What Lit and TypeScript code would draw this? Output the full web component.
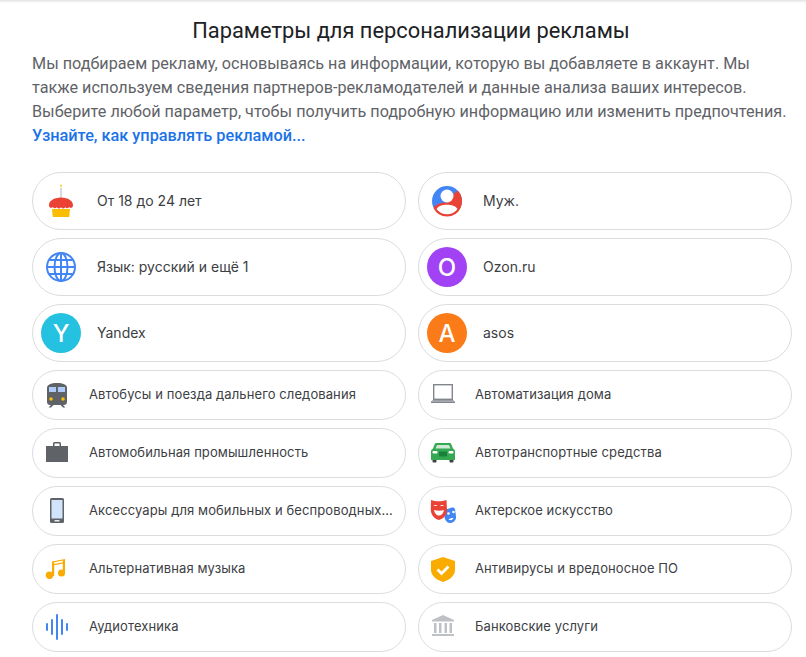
import { LitElement, html, css, svg } from 'lit';
import { customElement } from 'lit/decorators.js';

type Item = { label: string; icon?: unknown; letter?: string; color?: string };

const cake = svg`
  <rect x="17.400" y="5" width="1.200" height="10" fill="#bdc1c6"/>
  <path d="M18 1c.9 1.200 1 2.400 0 3.600-1-1.200-.9-2.400 0-3.600z" fill="#fbbc04"/>
  <path d="M9 26h18l-.8 8H9.800z" fill="#fbbc04"/>
  <path d="M6 23c-.6-5 5-8.500 12-8.500S30.600 18 30 23c-.8 2.400-2.900 2.200-3.800 1-1.200 1.600-2.900 1.600-4 .2-1.200 1.600-3 1.600-4.200 0-1.200 1.600-3 1.600-4.200 0-1.100 1.400-2.800 1.400-4 -.2C8.900 25.200 6.800 25.400 6 23z" fill="#ea4335"/>`;

const globe = svg`
  <g fill="none" stroke="#4285f4" stroke-width="2">
    <circle cx="18" cy="18" r="14"/>
    <ellipse cx="18" cy="18" rx="6.500" ry="14"/>
    <path d="M18 4v28M4 18h28M6 11h24M6 25h24"/>
  </g>`;

const person = svg`
  <circle cx="18" cy="18" r="15" fill="#4285f4"/>
  <path d="M28.600 7.400A15 15 0 0 1 28.600 28.600L18 24 20 15z" fill="#ea4335"/>
  <path d="M4.500 25a15 15 0 0 0 27 0c-2-4-8-5.500-13.500-5.500S6.500 21 4.500 25z" fill="#ea4335"/>
  <path d="M7.500 26c1.800-3 6-4.300 10.500-4.300s8.700 1.300 10.500 4.300a13 13 0 0 1-21 0z" fill="#fff"/>
  <circle cx="18" cy="13" r="6.500" fill="#fff"/>`;

const train = svg`
  <path d="M8 11c0-3.500 4-5 10-5s10 1.500 10 5v14c0 2-1.400 3-3 3H11c-1.600 0-3-1-3-3z" fill="#5f6368"/>
  <path d="M12 28l-2.500 2.500h2.500L14.500 28zM24 28l2.500 2.500H24L21.500 28z" fill="#5f6368"/>
  <rect x="10" y="10" width="7" height="5" fill="#aecbfa"/>
  <rect x="19" y="10" width="7" height="5" fill="#aecbfa"/>
  <circle cx="12" cy="22" r="1.800" fill="#fbbc04"/>
  <circle cx="24" cy="22" r="1.800" fill="#fbbc04"/>`;

const laptop = svg`
  <rect x="8.700" y="7.700" width="18.600" height="14.600" fill="none" stroke="#80868b" stroke-width="1.400"/>
  <path d="M8 23h20l2 1.500H6z" fill="#9aa0a6"/>
  <rect x="6" y="24.500" width="24" height="1.500" fill="#80868b"/>`;

const briefcase = svg`
  <path d="M14 11V8.500c0-.8.700-1.500 1.500-1.500h5c.8 0 1.500.7 1.500 1.500V11h-1.500V8.500h-5V11z" fill="#5f6368"/>
  <rect x="7" y="11" width="22" height="16" fill="#5f6368"/>`;

const car = svg`
  <rect x="7.500" y="24" width="4" height="3.500" rx="1" fill="#3c4043"/>
  <rect x="24.500" y="24" width="4" height="3.500" rx="1" fill="#3c4043"/>
  <path d="M8 13.500l1.700-4.200c.3-.8 1-1.300 1.800-1.300h13c.8 0 1.500.5 1.800 1.300l1.700 4.200c1.300.8 2 1.800 2 3.200V25H6v-8.300c0-1.400.7-2.400 2-3.200z" fill="#34a853"/>
  <path d="M10.500 13.500l1.500-3.500h12l1.500 3.500z" fill="#ceead6"/>
  <rect x="7.500" y="16" width="5" height="2.500" rx="1" fill="#fff"/>
  <rect x="23.500" y="16" width="5" height="2.500" rx="1" fill="#fff"/>
  <rect x="14" y="16.500" width="8" height="5" fill="#188038"/>`;

const phone = svg`
  <rect x="11" y="5" width="14" height="25" rx="1.500" fill="#5f6368"/>
  <rect x="12.500" y="7" width="11" height="18.500" fill="#d2e3fc"/>
  <rect x="15.500" y="27" width="5" height="1.500" fill="#e8eaed"/>`;

const masks = svg`
  <path d="M18 17.500l9-3c1.500-.3 2.500.2 3 1.500l1 7.500c.4 3-1.800 5.500-5 6.500-2.700.5-5-1.500-6-4z" fill="#4285f4"/>
  <circle cx="23.500" cy="20.500" r="1.300" fill="#fff"/>
  <circle cx="28.500" cy="19" r="1.300" fill="#fff"/>
  <path d="M23.500 26.500c1.300-1.200 3.300-1.800 5-1.500-.7 2-3.300 3-5 1.500z" fill="#fff"/>
  <path d="M6 7c4.500 1.800 10.500 1.800 15.500 0l.5 9.500c.1 5-3 9-8 10.500-4.500-1-8-5-8.200-10z" fill="#ea4335"/>
  <path d="M8.500 13c1-1.500 3-1.500 4 0zM15 13c1-1.500 3-1.500 4 0z" fill="#fff"/>
  <path d="M9 17c3 1 7 1 10 0-.5 3.500-2.500 5.500-5 5.500s-4.500-2-5-5.500z" fill="#fff"/>`;

const note = svg`
  <path d="M13 10.500L26 8v15h-2.200v-10.500l-8.600 1.700V25H13z" fill="#f9ab00"/>
  <path d="M15.200 11.200L23.800 9.500v1.800l-8.600 1.700z" fill="#fff"/>
  <circle cx="10.500" cy="24.300" r="3.700" fill="#f9ab00"/>
  <circle cx="22.500" cy="22" r="3.500" fill="#f9ab00"/>`;

const shield = svg`
  <path d="M18 6l12 4v9c0 5.500-5 9.700-12 12-7-2.300-12-6.500-12-12v-9z" fill="#f9ab00"/>
  <path d="M12.500 18.500l4 4 7-7" fill="none" stroke="#fff" stroke-width="2.800"/>`;

const wave = svg`
  <g stroke="#4285f4" stroke-width="2" stroke-linecap="round">
    <path d="M8 15v6M13 11v14M18 6v24M23 11v14M28 15v6"/>
  </g>`;

const bank = svg`
  <path d="M18 6L29 11v1.500H7V11z" fill="#bdc1c6"/>
  <path d="M9 14h2.500v10H9zM14 14h2.500v10H14zM19.500 14H22v10h-2.500zM24.500 14H27v10h-2.500z" fill="#bdc1c6"/>
  <rect x="7" y="25" width="22" height="2" fill="#bdc1c6"/>`;

const profile: Item[] = [
  { label: 'От 18 до 24 лет', icon: cake },
  { label: 'Муж.', icon: person },
  { label: 'Язык: русский и ещё 1', icon: globe },
  { label: 'Ozon.ru', letter: 'O', color: '#a142f4' },
  { label: 'Yandex', letter: 'Y', color: '#24c1e0' },
  { label: 'asos', letter: 'A', color: '#fa7b17' },
];

const topics: Item[] = [
  { label: 'Автобусы и поезда дальнего следования', icon: train },
  { label: 'Автоматизация дома', icon: laptop },
  { label: 'Автомобильная промышленность', icon: briefcase },
  { label: 'Автотранспортные средства', icon: car },
  { label: 'Аксессуары для мобильных и беспроводных устройств', icon: phone },
  { label: 'Актерское искусство', icon: masks },
  { label: 'Альтернативная музыка', icon: note },
  { label: 'Антивирусы и вредоносное ПО', icon: shield },
  { label: 'Аудиотехника', icon: wave },
  { label: 'Банковские услуги', icon: bank },
];

@customElement('app-root')
export class AppRoot extends LitElement {
  private renderIcon(item: Item) {
    if (item.letter) {
      return html`<span class="avatar" style="background:${item.color}">${item.letter}</span>`;
    }
    return html`<svg viewBox="0 0 36 36" aria-hidden="true">${item.icon}</svg>`;
  }

  private renderChip(item: Item) {
    return html`<div class="chip">
      <span class="slot">${this.renderIcon(item)}</span><span class="label">${item.label}</span>
    </div>`;
  }

  render() {
    return html`
      <main>
        <h1>Параметры для персонализации рекламы</h1>
        <p>
          Мы подбираем рекламу, основываясь на информации, которую вы добавляете в аккаунт. Мы<br />
          также используем сведения партнеров-рекламодателей и данные анализа ваших интересов.<br />
          Выберите любой параметр, чтобы получить подробную информацию или изменить предпочтения.<br />
          <a href="#">Узнайте, как управлять рекламой...</a>
        </p>
        <div class="grid profile">${profile.map((item) => this.renderChip(item))}</div>
        <div class="grid topics">${topics.map((item) => this.renderChip(item))}</div>
      </main>
    `;
  }

  static styles = css`
    :host {
      display: block;
      height: 657px;
      overflow: hidden;
      background: #fff;
      box-shadow: inset 0 3px 3px -2px rgba(60, 64, 67, 0.2);
      font-family: Roboto, 'Noto Sans', sans-serif;
    }

    main {
      padding: 17px 14px 0 32px;
    }

    h1 {
      margin: 0 2px 0 0;
      font-size: 21.85px;
      line-height: 28px;
      font-weight: 400;
      color: #202124;
      text-align: center;
    }

    p {
      margin: 7px 0 0;
      font-size: 16.2px;
      line-height: 24px;
      white-space: nowrap;
      color: #5f6368;
    }

    a {
      font-size: 16.3px;
      font-weight: 500;
      color: #1a73e8;
      text-decoration: none;
    }

    .grid {
      display: grid;
      grid-template-columns: 374px 374px;
      column-gap: 12px;
      row-gap: 8px;
    }

    .profile {
      margin-top: 24px;
    }

    .topics {
      margin-top: 8px;
    }

    .chip {
      display: flex;
      align-items: center;
      box-sizing: border-box;
      min-width: 0;
      border: 1px solid #dadce0;
      border-radius: 29px;
      font-family: Inter, Roboto, sans-serif;
      font-size: 14px;
      color: #3c4043;
    }

    .profile .chip {
      height: 58px;
    }

    .topics .chip {
      height: 50px;
      font-size: 13px;
      letter-spacing: 0.1px;
    }

    .slot {
      flex: none;
      display: flex;
      align-items: center;
      justify-content: center;
      width: 56px;
      margin-right: 8px;
    }

    .topics .slot {
      width: 48px;
    }

    svg {
      display: block;
      width: 36px;
      height: 36px;
    }

    .avatar {
      display: flex;
      align-items: center;
      justify-content: center;
      width: 40px;
      height: 40px;
      border-radius: 50%;
      color: #fff;
      font-size: 24px;
      font-weight: 500;
    }

    .label {
      min-width: 0;
      white-space: nowrap;
      overflow: hidden;
      text-overflow: ellipsis;
      padding: 0 9px 2px 0;
    }
  `;
}
